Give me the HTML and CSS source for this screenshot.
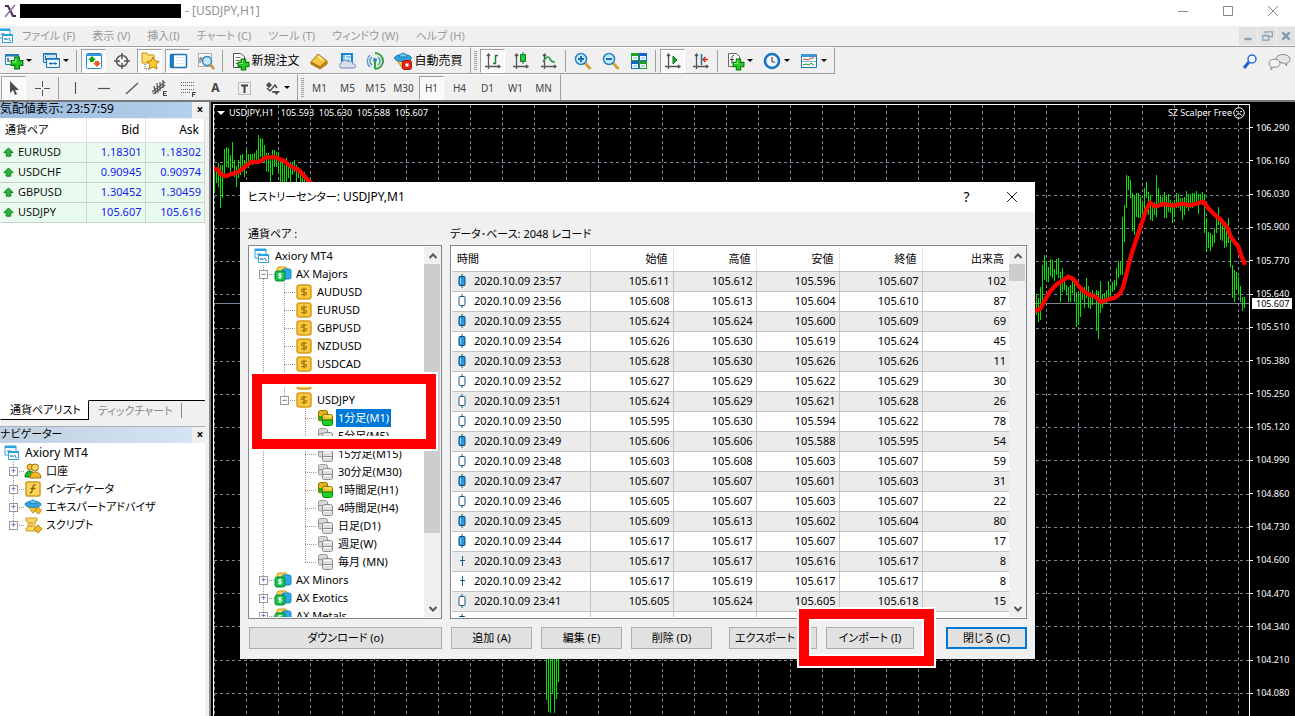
FILE: index.html
```html
<!DOCTYPE html>
<html lang="ja">
<head>
<meta charset="utf-8">
<title>[USDJPY,H1]</title>
<link rel="stylesheet" href="styles.css">
</head>
<body>
<svg class="defs" aria-hidden="true">
  <symbol id="mt" viewBox="0 0 16 16"><path d="M1 1h11v9H1z" fill="#fff" stroke="#2ba3e0"/><path d="M1 2h11" stroke="#2ba3e0" stroke-width="2"/><path d="M3 7l1-2 1 2 1-2 1 2" fill="none" stroke="#7aa8dc"/><path d="M4.500 6.500h10v8h-10z" fill="#fff" stroke="#2ba3e0"/><path d="M4 7h11" stroke="#2ba3e0" stroke-width="2"/><path d="M6 10l1 2 1-2 1 2 2-2 1 3 1-1" fill="none" stroke="#5b8ed0"/></symbol>
  <symbol id="plus" viewBox="0 0 12 12"><path d="M4 1h4v3h3v4H8v3H4V8H1V4h3z" fill="#22c922" stroke="#087a08"/><path d="M5 2v3H2" fill="none" stroke="#7cf07c"/></symbol>
  <symbol id="newchart" viewBox="0 0 20 20"><path d="M1.500 3.500h13v10h-13z" fill="#e9f5ff" stroke="#2a7cb5"/><path d="M1 4.500h14" stroke="#2a7cb5" stroke-width="2"/><path d="M4 7v4M3 8h2M4 10h2" stroke="#456"/><use href="#plus" x="6" y="5" width="14" height="14"/></symbol>
  <symbol id="wins" viewBox="0 0 20 20"><path d="M2.500 2.500h13v9h-13z" fill="#cfe6f7" stroke="#1c71b0"/><path d="M5.500 7.500h13v9h-13z" fill="#e9f5ff" stroke="#1c71b0"/><path d="M3 3.500h12M6 8.500h12" stroke="#3f95cf"/><path d="M8 12.500h8M10 11v3M14 11v3M4.500 5v4" stroke="#1c71b0"/></symbol>
  <symbol id="mw" viewBox="0 0 20 20"><rect x="2.500" y="2.500" width="15" height="15" rx="1" fill="#fff" stroke="#2387cb"/><path d="M3 4h14" stroke="#3b9add" stroke-width="2"/><path d="M8 5l4 4h-2v2H6V9H4z" fill="#14a314"/><path d="M13 16l-4-4h2v-2h4v2h2z" fill="#f0561d"/></symbol>
  <symbol id="target" viewBox="0 0 20 20"><circle cx="10" cy="10" r="5.500" fill="none" stroke="#555" stroke-width="1.500"/><path d="M10 2v6M10 12v6M2 10h6M12 10h6" stroke="#555" stroke-width="1.500"/></symbol>
  <symbol id="folderstar" viewBox="0 0 20 20"><path d="M2 2h5l1 2h6v8H2z" fill="#ffdc6b" stroke="#c99412"/><path d="M5 13v5h5" fill="none" stroke="#555" stroke-dasharray="1 1"/><path d="M13 6l2 4 4 .5-3 3 1 4.500-4-2-4 2 1-4.500-3-3 4-.5z" fill="#ffcb2e" stroke="#b87f09"/></symbol>
  <symbol id="nav" viewBox="0 0 20 20"><rect x="2.500" y="3.500" width="16" height="13" rx="1" fill="#fff" stroke="#1374bb" stroke-width="1.500"/><path d="M4.500 4v12" stroke="#1d7fc5" stroke-width="3"/><path d="M8 6.500h9M8 9.500h9M8 12.500h9" stroke="#dce9f5"/></symbol>
  <symbol id="tester" viewBox="0 0 20 20"><path d="M2.500 2.500h13v13h-13z" fill="#f5f5f5" stroke="#aaa"/><path d="M4 12V7h2v3h2V6M13 5v3" fill="none" stroke="#555"/><circle cx="11" cy="10" r="4.500" fill="#c5e5fa" fill-opacity=".9" stroke="#2e8ccc" stroke-width="1.500"/><path d="M14 13l4 5" stroke="#c89030" stroke-width="2.500"/></symbol>
  <symbol id="order" viewBox="0 0 20 20"><path d="M3.500 2.500h7l4 3v11h-11z" fill="#fafafa" stroke="#555"/><path d="M5.500 6.500h5M5.500 9.500h6M5.500 12.500h4" stroke="#777"/><use href="#plus" x="7" y="7" width="13" height="13"/></symbol>
  <symbol id="gold" viewBox="0 0 20 20"><path d="M9 3l9 7-7 6-9-5z" fill="#f6c445" stroke="#a86e0b"/><path d="M2 11l9 5 7-6v3l-7 5-9-5z" fill="#c98a12" stroke="#a86e0b"/><path d="M9 5l5 4" stroke="#ffe9a5" stroke-width="2"/></symbol>
  <symbol id="cloud" viewBox="0 0 20 20"><path d="M5 3h10v9H5z" fill="#eaf6ff" stroke="#1c84cf" stroke-width="2"/><path d="M7 3v7M9 6h5M9 9h4" stroke="#2497e0"/><path d="M4 17a3 3 0 0 1 0-5 4 4 0 0 1 7-1 3 3 0 0 1 5 2 2 2 0 0 1 1 4z" fill="#d5dff0" stroke="#7289b5"/></symbol>
  <symbol id="signal" viewBox="0 0 20 20"><circle cx="10" cy="10" r="8" fill="#e4f0e8"/><path d="M10 18a8 8 0 0 0 0-16" fill="none" stroke="#39a045" stroke-width="2"/><path d="M5 4a8 8 0 0 0 0 12M7 6a5 5 0 0 0 0 8M13 6a5 5 0 0 1 0 8" fill="none" stroke="#5b9bd0" stroke-width="1.500"/><circle cx="10" cy="9" r="2" fill="#1d8ac9"/><path d="M10 10v8" stroke="#30a53b" stroke-width="2"/></symbol>
  <symbol id="hat" viewBox="0 0 20 20"><path d="M3 8l7 10 7-9z" fill="#f4c33b" stroke="#c28c16"/><ellipse cx="10" cy="7" rx="8.500" ry="3.500" fill="#35a4e0" stroke="#1b7db8"/><path d="M6 6c0-5 8-5 8 0z" fill="#6fc7f2" stroke="#1b7db8"/></symbol>
  <symbol id="auto" viewBox="0 0 20 20"><use href="#hat"/><rect x="9.500" y="9.500" width="9" height="9" rx="2" fill="#e22718" stroke="#a91208"/><path d="M12.500 12.500h3v3h-3z" fill="#fff"/></symbol>
  <symbol id="axes" viewBox="0 0 20 20"><path d="M5.500 3v15M2 15.500h15M4 5l1.500-2L7 5M15 14l2 1.500-2 1.500" fill="none" stroke="#555" stroke-width="1.300"/></symbol>
  <symbol id="bars" viewBox="0 0 20 20"><use href="#axes"/><path d="M12.500 4v9M10 12.500h3M12 4.500h3" stroke="#17852a" stroke-width="1.500"/></symbol>
  <symbol id="candles" viewBox="0 0 20 20"><use href="#axes"/><path d="M12 1v12" stroke="#17852a"/><path d="M9.500 3.500h5v7h-5z" fill="#22c93d" stroke="#0f7a20"/></symbol>
  <symbol id="line" viewBox="0 0 20 20"><use href="#axes"/><path d="M4 11c3-6 6-6 7-3s3 3 5 3" fill="none" stroke="#1c9433" stroke-width="1.500"/></symbol>
  <symbol id="lens" viewBox="0 0 20 20"><path d="M12 12l5.500 6" stroke="#d2a032" stroke-width="3"/><circle cx="8" cy="8" r="5.500" fill="#c7e9fb" stroke="#2383c8" stroke-width="1.500"/></symbol>
  <symbol id="zin" viewBox="0 0 20 20"><use href="#lens"/><path d="M5 8h6M8 5v6" stroke="#1470b4" stroke-width="2"/></symbol>
  <symbol id="zout" viewBox="0 0 20 20"><use href="#lens"/><path d="M5 8h6" stroke="#1470b4" stroke-width="2"/></symbol>
  <symbol id="tiles" viewBox="0 0 20 20"><path d="M2 2h8v8H2zM10 10h8v8h-8z" fill="#1ba51b"/><path d="M10 2h8v8h-8zM2 10h8v8H2z" fill="#1761d2"/><path d="M3 5h6v4H3zM11 5h6v4h-6zM3 13h6v4H3zM11 13h6v4h-6z" fill="#eef5ff"/><path d="M4 7h4M12 7h4M4 15h4M12 15h4" stroke="#8cb3df"/></symbol>
  <symbol id="scroll" viewBox="0 0 20 20"><use href="#axes"/><path d="M10 5l4 4-4 4z" fill="#20a437" stroke="#0f7a20"/></symbol>
  <symbol id="shift" viewBox="0 0 20 20"><use href="#axes"/><path d="M10.500 3v11" stroke="#1b6da8" stroke-width="1.500"/><path d="M17 8.500h-5M14.500 6L12 8.500l2.500 2.500" fill="none" stroke="#c93415" stroke-width="1.500"/></symbol>
  <symbol id="indi" viewBox="0 0 20 20"><path d="M3.500 2.500h8l3 3v10h-11z" fill="#fafafa" stroke="#666"/><path d="M9 4.500c-2 0-2 1-2 3v5M5 8.500h4" fill="none" stroke="#444"/><use href="#plus" x="7" y="7" width="13" height="13"/></symbol>
  <symbol id="clock" viewBox="0 0 20 20"><circle cx="10" cy="10" r="7" fill="#f2f7fb" stroke="#1673c4" stroke-width="2.600"/><path d="M10 6v4.500l3 1" fill="none" stroke="#555" stroke-width="1.300"/></symbol>
  <symbol id="tmpl" viewBox="0 0 20 20"><path d="M2.500 3.500h15v13h-15z" fill="#fff" stroke="#1c71b0"/><path d="M2 4.500h16" stroke="#3b98d8" stroke-width="3"/><path d="M4 9l2-1 3 1 3-2 3 0" fill="none" stroke="#c0391c"/><path d="M3 10.500h14" stroke="#8bb9dc"/><path d="M4 14l3-1 3 1 2-2 3 2" fill="none" stroke="#249538"/></symbol>
  <symbol id="arrow" viewBox="0 0 20 20"><path d="M6 3v12l3-3 2 5 2-1-2-4h4z" fill="#4d4d4d"/></symbol>
  <symbol id="cross" viewBox="0 0 20 20"><path d="M10.500 3v6M10.500 12v6M3 10.500h6M12 10.500h6" stroke="#555"/></symbol>
  <symbol id="vl" viewBox="0 0 20 20"><path d="M9.500 4v12" stroke="#555" stroke-width="1.200"/></symbol>
  <symbol id="hl" viewBox="0 0 20 20"><path d="M4 10.500h12" stroke="#555" stroke-width="1.200"/></symbol>
  <symbol id="dl" viewBox="0 0 20 20"><path d="M4 16L16 5" stroke="#555" stroke-width="1.300"/></symbol>
  <symbol id="chan" viewBox="0 0 20 20"><path d="M2 14L15 4M3 16l12-9M4 8l2 8M7 5l1 10M10 4v9M13 2v8" stroke="#555" stroke-width="1.300"/><path d="M13.500 13v5M13 13.500h4M13 15.500h3M13 17.500h4" stroke="#444"/></symbol>
  <symbol id="fib" viewBox="0 0 20 20"><path d="M3 4.500h14M3 7.500h14M3 11.500h14M3 14.500h9" stroke="#666" stroke-dasharray="1 1"/><path d="M14.500 14v5M14 14.500h4M14 16.500h3" stroke="#444"/></symbol>
  <symbol id="tbox" viewBox="0 0 20 20"><path d="M4.500 4.500h12v12h-12z" fill="none" stroke="#888" stroke-dasharray="1 1"/><path d="M7 7.500h7M10.500 7v8" stroke="#444" stroke-width="2"/></symbol>
  <symbol id="shapes" viewBox="0 0 20 20"><path d="M4 7l3-3 3 3-3 3zM11 13h7l-3.500 4z" fill="#4d4d4d"/><path d="M5 10l3 3 5-6 2 3M10 14h3" fill="none" stroke="#4d4d4d" stroke-width="1.500"/></symbol>
  <symbol id="up" viewBox="0 0 12 12"><path d="M6 1l5 5H8.500v4h-5V6H1z" fill="#27b53a" stroke="#0c7a1f"/></symbol>
  <symbol id="coin" viewBox="0 0 16 16"><rect x="1" y="1" width="14" height="14" rx="2.500" fill="#fbc93f" stroke="#d69a1c" stroke-width="1.500"/><path d="M10.500 5.500c-1-1-5-1-5 1s5 1 5 3-4 2-5 .500M8 3.500v9" fill="none" stroke="#a66f08" stroke-width="1.200"/></symbol>
  <symbol id="group" viewBox="0 0 18 16"><rect x="3" y="1" width="10" height="8" rx="2" fill="#fbd557" stroke="#c9971b"/><rect x="8" y="3" width="9" height="10" rx="2" fill="#2aa9ea" stroke="#1382c0"/><rect x="1" y="5" width="10" height="10" rx="2" fill="#18c14e" stroke="#078531"/><path d="M8 8c-1-1-4-.5-4 .500s4 1 4 2-3 1.500-4 .500M6 7v6" fill="none" stroke="#fff"/></symbol>
  <symbol id="dby" viewBox="0 0 18 16"><path d="M2.500 2c0-1 1-1.500 2-1.500h5c1 0 2 .5 2 1.500v9h-7c-1 0-2-.5-2-1z" fill="#e0b516" stroke="#8d7009"/><path d="M3 6h4v4.500H4L3 10z" fill="#1bb51b"/><path d="M6.500 6c0-1 1-1.500 2-1.500h6c1 0 2 .5 2 1.500v4h-10z" fill="#f2cb22" stroke="#8d7009"/><path d="M6.500 10h10v4c0 1-1 1.500-2 1.500h-6c-1 0-2-.5-2-1.500z" fill="#20d020" stroke="#0b8a0b"/><path d="M8 6h7" stroke="#fff09a"/></symbol>
  <symbol id="dbg" viewBox="0 0 18 16"><path d="M2.500 2c0-1 1-1.500 2-1.500h5c1 0 2 .5 2 1.500v9h-7c-1 0-2-.5-2-1z" fill="#d8d8d8" stroke="#999"/><path d="M3 5.500h4" stroke="#999"/><path d="M6.500 6c0-1 1-1.500 2-1.500h6c1 0 2 .5 2 1.500v8c0 1-1 1.500-2 1.500h-6c-1 0-2-.5-2-1.500z" fill="#dedede" stroke="#8d8d8d"/><path d="M7 10.500h9" stroke="#8d8d8d"/><path d="M8 6.500h7M8 11.500h7" stroke="#fff"/></symbol>
  <symbol id="people" viewBox="0 0 18 16"><circle cx="6" cy="4" r="3" fill="#f5c33a" stroke="#a37408"/><path d="M1 14c0-8 9-8 10 0z" fill="#1fb42b" stroke="#0c7a16"/><circle cx="11" cy="4.500" r="3.500" fill="#ffd35a" stroke="#a37408"/><path d="M6 15c0-8 11-8 11 0z" fill="#f3b928" stroke="#a37408"/></symbol>
  <symbol id="func" viewBox="0 0 16 16"><rect x="1" y="1" width="14" height="14" rx="1.500" fill="#fcd65c" stroke="#d19a1a" stroke-width="1.500"/><path d="M11 4c-3-1-3 2-3.500 4S7 12 5 12M5.500 7.500h5" fill="none" stroke="#8a5a05" stroke-width="1.300"/></symbol>
  <symbol id="gem" viewBox="0 0 8 8"><path d="M4 0l4 4-4 4-4-4z" fill="#f0b92b" stroke="#b5820f"/></symbol>
  <symbol id="expert" viewBox="0 0 20 18"><path d="M3 7l7 9 6-8z" fill="#f4c33b" stroke="#c28c16"/><ellipse cx="10" cy="6" rx="9" ry="3.500" fill="#35a4e0" stroke="#1b7db8"/><path d="M6 5c0-5 8-5 8 0z" fill="#6fc7f2" stroke="#1b7db8"/><use href="#gem" x="12" y="9" width="8" height="8"/></symbol>
  <symbol id="scriptic" viewBox="0 0 18 16"><path d="M2 1h11v3h-2v7h2v3H2v-3h2V4H2z" fill="#fbd768" stroke="#cf9d24"/><path d="M5 6h4M5 9h4" stroke="#b3841b"/><use href="#gem" x="10" y="8" width="8" height="8"/></symbol>
  <symbol id="kf" viewBox="0 0 10 14"><path d="M5 0v14" stroke="#0b4a77"/><rect x="2" y="2.500" width="6" height="9" rx="1" fill="#2b9be0" stroke="#0b4a77"/><path d="M3.500 4v6" stroke="#8fd0f7"/></symbol>
  <symbol id="kh" viewBox="0 0 10 14"><path d="M5 0v14" stroke="#145b88"/><rect x="2" y="2.500" width="6" height="9" rx="1" fill="#fff" stroke="#145b88"/></symbol>
  <symbol id="kd" viewBox="0 0 10 14"><path d="M5.500 2v10M3 6.500h5" stroke="#145b88"/></symbol>
  <symbol id="cu" viewBox="0 0 10 10"><path d="M1.500 7L5 3.500 8.500 7" fill="none" stroke="#555" stroke-width="2"/></symbol>
  <symbol id="cd" viewBox="0 0 10 10"><path d="M1.500 3L5 6.500 8.500 3" fill="none" stroke="#555" stroke-width="2"/></symbol>
</svg>

<header class="titlebar">
  <svg class="logo" viewBox="0 0 12 14"><path d="M1 2h3l5 10h3" fill="none" stroke="#4b2a63" stroke-width="2"/><path d="M11 1L1 13" stroke="#8f6fa8" stroke-width="1.500"/></svg>
  <span class="redacted"></span>
  <span class="caption">- [USDJPY,H1]</span>
  <div class="winbtns">
    <button aria-label="Minimize"><svg viewBox="0 0 12 12"><path d="M1 6.500h10" stroke="#888"/></svg></button>
    <button aria-label="Maximize"><svg viewBox="0 0 12 12"><path d="M1.500 1.500h9v9h-9z" fill="none" stroke="#888"/></svg></button>
    <button aria-label="Close"><svg viewBox="0 0 12 12"><path d="M1 1l10 10M11 1L1 11" stroke="#888"/></svg></button>
  </div>
</header>
<nav class="menubar">
  <svg class="i16"><use href="#mt"/></svg>
  <button>ファイル (F)</button><button>表示 (V)</button><button>挿入(I)</button><button>チャート (C)</button><button>ツール (T)</button><button>ウィンドウ (W)</button><button>ヘルプ (H)</button>
  <div class="mdi">
    <button aria-label="最小化"><svg viewBox="0 0 10 10"><path d="M2 7.500h6" stroke="#8aa2b5" stroke-width="2"/></svg></button>
    <button aria-label="元に戻す"><svg viewBox="0 0 10 10"><path d="M3.500 3V1.500h6v4H7M1.500 4.500h5v4h-5zM1 5h6" fill="none" stroke="#8aa2b5"/></svg></button>
    <button aria-label="閉じる"><svg viewBox="0 0 10 10"><path d="M2 2l6 6M8 2L2 8" stroke="#8099ad" stroke-width="2"/></svg></button>
  </div>
</nav>
<div class="bars">
  <div class="bar">
    <div class="strip first">
      <button class="tb dd" aria-label="新規チャート"><svg><use href="#newchart"/></svg></button>
      <button class="tb dd" aria-label="ウィンドウ配置"><svg><use href="#wins"/></svg></button>
      <i class="sep"></i>
      <button class="tb on" aria-label="気配値表示"><svg><use href="#mw"/></svg></button>
      <button class="tb" aria-label="データウィンドウ"><svg><use href="#target"/></svg></button>
      <button class="tb on" aria-label="ナビゲーター"><svg><use href="#folderstar"/></svg></button>
      <button class="tb on" aria-label="ターミナル"><svg><use href="#nav"/></svg></button>
      <button class="tb" aria-label="テスター"><svg><use href="#tester"/></svg></button>
      <i class="sep"></i>
      <button class="tb txt"><svg><use href="#order"/></svg>新規注文</button>
      <button class="tb" aria-label="MetaEditor"><svg><use href="#gold"/></svg></button>
      <button class="tb" aria-label="VPS"><svg><use href="#cloud"/></svg></button>
      <button class="tb" aria-label="シグナル"><svg><use href="#signal"/></svg></button>
      <button class="tb txt"><svg><use href="#auto"/></svg>自動売買</button>
    </div>
    <div class="strip">
      <i class="grip"></i>
      <button class="tb on" aria-label="バーチャート"><svg><use href="#bars"/></svg></button>
      <button class="tb" aria-label="ローソク足"><svg><use href="#candles"/></svg></button>
      <button class="tb" aria-label="ラインチャート"><svg><use href="#line"/></svg></button>
      <i class="sep"></i>
      <button class="tb" aria-label="拡大"><svg><use href="#zin"/></svg></button>
      <button class="tb" aria-label="縮小"><svg><use href="#zout"/></svg></button>
      <button class="tb" aria-label="整列"><svg><use href="#tiles"/></svg></button>
      <i class="sep"></i>
      <button class="tb on" aria-label="自動スクロール"><svg><use href="#scroll"/></svg></button>
      <button class="tb" aria-label="チャートシフト"><svg><use href="#shift"/></svg></button>
      <i class="sep"></i>
      <button class="tb dd" aria-label="インディケータ"><svg><use href="#indi"/></svg></button>
      <button class="tb dd" aria-label="時間軸"><svg><use href="#clock"/></svg></button>
      <button class="tb dd" aria-label="定型チャート"><svg><use href="#tmpl"/></svg></button>
    </div>
    <div class="right">
      <button class="tb" aria-label="検索"><svg viewBox="0 0 20 20"><path d="M4 17l5-6" stroke="#1d5fd0" stroke-width="3"/><circle cx="12" cy="8" r="4" fill="#fff" stroke="#1d6fe0" stroke-width="1.500"/></svg></button>
      <button class="tb wide" aria-label="チャット"><svg viewBox="0 0 24 20"><path d="M9 8c0-6 14-6 14 0 0 4-3 4-4 4l1 3-3-3c-4 0-8-1-8-4z" fill="#e6e6ea" stroke="#888"/><path d="M2 12c0-5 11-5 11 0s-5 4-7 4l-2 3v-4c-1 0-2-1-2-3z" fill="#f4f4f6" stroke="#888"/></svg></button>
    </div>
  </div>
  <div class="bar">
    <div class="strip first">
      <button class="tb on" aria-label="カーソル"><svg><use href="#arrow"/></svg></button>
      <button class="tb" aria-label="十字カーソル"><svg><use href="#cross"/></svg></button>
      <i class="sep"></i>
      <button class="tb" aria-label="垂直線"><svg><use href="#vl"/></svg></button>
      <button class="tb" aria-label="水平線"><svg><use href="#hl"/></svg></button>
      <button class="tb" aria-label="トレンドライン"><svg><use href="#dl"/></svg></button>
      <button class="tb" aria-label="チャネル"><svg><use href="#chan"/></svg></button>
      <button class="tb" aria-label="フィボナッチ"><svg><use href="#fib"/></svg></button>
      <button class="tb letter">A</button>
      <button class="tb" aria-label="ラベル"><svg><use href="#tbox"/></svg></button>
      <button class="tb dd" aria-label="矢印"><svg><use href="#shapes"/></svg></button>
    </div>
    <div class="strip">
      <i class="grip"></i>
      <button class="tb tf">M1</button><button class="tb tf">M5</button><button class="tb tf">M15</button><button class="tb tf">M30</button><button class="tb tf on">H1</button><button class="tb tf">H4</button><button class="tb tf">D1</button><button class="tb tf">W1</button><button class="tb tf">MN</button>
    </div>
  </div>
</div>

<main class="work">
  <aside class="side">
    <section class="watch">
      <h2 class="dock">気配値表示: 23:57:59<button aria-label="閉じる">×</button></h2>
      <table class="quotes">
        <colgroup><col class="q1"><col class="q2"><col></colgroup>
        <thead><tr><th>通貨ペア</th><th>Bid</th><th>Ask</th></tr></thead>
        <tbody>
          <tr><td><svg><use href="#up"/></svg>EURUSD</td><td>1.18301</td><td>1.18302</td></tr>
          <tr><td><svg><use href="#up"/></svg>USDCHF</td><td>0.90945</td><td>0.90974</td></tr>
          <tr><td><svg><use href="#up"/></svg>GBPUSD</td><td>1.30452</td><td>1.30459</td></tr>
          <tr><td><svg><use href="#up"/></svg>USDJPY</td><td>105.607</td><td>105.616</td></tr>
        </tbody>
      </table>
      <div class="tabs"><button class="tab cur">通貨ペアリスト</button><button class="tab"><span>ティックチャート</span></button></div>
    </section>
    <section class="navi">
      <h2 class="dock pale">ナビゲーター<button aria-label="閉じる">×</button></h2>
      <ul class="tree">
        <li class="root"><svg><use href="#mt"/></svg>Axiory MT4</li>
        <li><span class="g h"><button class="tg" aria-label="展開">+</button></span><svg><use href="#people"/></svg>口座</li>
        <li><span class="g h"><button class="tg" aria-label="展開">+</button></span><svg><use href="#func"/></svg>インディケータ</li>
        <li><span class="g h"><button class="tg" aria-label="展開">+</button></span><svg><use href="#expert"/></svg>エキスパートアドバイザ</li>
        <li><span class="g h end"><button class="tg" aria-label="展開">+</button></span><svg><use href="#scriptic"/></svg>スクリプト</li>
      </ul>
    </section>
  </aside>
  <section class="chart">
    <div class="plot">
      <svg class="canvas">
        <defs>
          <pattern id="vgrid" patternUnits="userSpaceOnUse" x="246" y="105" width="32" height="6"><path d="M.500 0v3" stroke="#778899"/></pattern>
        </defs>
        <g transform="translate(-214 -105)">
          <rect x="214" y="105" width="3000" height="2000" fill="url(#vgrid)"/>
          <path class="hgrid" d="M214 128.500H3000M214 162.500H3000M214 195.500H3000M214 228.500H3000M214 261.500H3000M214 294.500H3000M214 328.500H3000M214 361.500H3000M214 394.500H3000M214 427.500H3000M214 460.500H3000M214 494.500H3000M214 527.500H3000M214 560.500H3000M214 593.500H3000M214 626.500H3000M214 660.500H3000M214 693.500H3000"/>
          <path d="M214 303.500H3000" stroke="#778899"/>
          <g transform="translate(210.500 100) scale(.33333)">
            <path class="px" d="M12 220V280M18 205V250M24 190V262M30 195V323M36 195V293M42 147V235M48 140V200M54 143V205M60 165V220M66 125V205M72 180V230M78 198V262M84 180V235M90 165V225M96 162V215M102 180V230M108 150V200M114 163V205M120 162V190M126 162V195M132 160V190M138 150V190M144 105V190M150 115V170M156 118V175M162 135V185M168 160V212M174 160V215M180 170V245M186 150V225M192 150V200M198 155V200M204 157V220M210 180V245M216 190V245M222 195V245M228 175V245M234 200V235M240 185V245M246 185V225M252 180V215M258 195V245M264 200V235M270 215V245M276 222V245M282 215V245"/>
            <path class="ma" d="M10 208L20 207 30 222 45 229 60 223 80 217 95 207 110 195 122 186 145 185 155 180 165 172 180 172 195 171 207 178 220 182 235 195 250 204 265 210 278 225 292 240 304 250"/>
          </g>
          <g transform="translate(1030 165) scale(.33333)">
            <path class="px" d="M19 388V450M25 400V470M31 365V465M37 300V420M43 270V345M49 288V350M55 305V350M61 282V332M67 285V340M73 312V348M79 283V330M85 278V340M91 320V410M97 310V380M103 335V375M109 360V390M115 365V410M121 360V410M127 345V385M133 345V410M139 380V486M145 390V480M151 370V455M157 365V405M163 365V430M169 340V400M175 362V430M181 380V433M187 375V420M193 385V400M199 375V497M205 378V522M211 347V445M217 390V430M223 385V415M229 375V418M235 347V400M241 360V400M247 350V380M253 345V375M259 310V362M265 287V340M271 290V330M277 155V330M283 120V232M289 30V130M295 33V75M301 45V100M307 85V197M313 90V210M319 83V155M325 83V160M331 95V160M337 110V155M343 70V140M349 50V100M355 80V150M361 90V165M367 110V167M373 110V150M379 30V155M385 70V130M391 90V125M397 95V120M403 80V160M409 90V160M415 88V140M421 105V145M427 110V173M433 105V155M439 85V130M445 88V130M451 100V137M457 100V165M463 97V150M469 78V130M475 88V138M481 88V128M487 85V130M493 85V120M499 78V118M505 88V147M511 88V115M517 80V120M523 88V205M529 158V260M535 200V250M541 205V258M547 210V245M553 190V235M559 150V205M565 125V180M571 165V225M577 180V228M583 185V248M589 175V245M595 158V235M601 200V305M607 300V398M613 315V412M619 320V375M625 335V390M631 362V412M637 395V438M643 397V430"/>
            <path class="ma" d="M10 440L30 432 45 405 60 380 80 358 100 345 115 335 130 342 145 362 160 378 175 388 195 395 213 411 235 403 255 398 270 385 278 370 285 345 298 290 310 250 325 205 340 160 350 130 360 113 375 125 400 117 430 122 455 116 480 121 500 116 520 110 535 130 555 150 570 162 590 185 605 220 625 245 635 275 645 300"/>
          </g>
          <path class="px1" d="M546.500 650V700M548.500 650V712M550.500 650V713M552.500 650V694M554.500 650V713M556.500 650V699M558.500 650V682"/>
        </g>
      </svg>
      <div class="legend"><svg viewBox="0 0 8 6"><path d="M0 1h8L4 5z" fill="#fff"/></svg><span>USDJPY,H1&nbsp;&nbsp; 105.593&nbsp; 105.630&nbsp; 105.588&nbsp; 105.607</span>
        <span class="ea">SZ Scalper Free</span><svg class="face" viewBox="0 0 12 12"><circle cx="6" cy="6" r="5.300" fill="none" stroke="#fff"/><path d="M3 4l2 1M9 4L7 5M3 9c1-3 5-3 6 0" fill="none" stroke="#fff"/></svg></div>
    </div>
    <div class="axis">
      <span>106.290</span><span>106.160</span><span>106.030</span><span>105.900</span><span>105.770</span><span>105.640</span><span>105.510</span><span>105.380</span><span>105.250</span><span>105.120</span><span>104.990</span><span>104.860</span><span>104.730</span><span>104.600</span><span>104.470</span><span>104.340</span><span>104.210</span><span>104.080</span>
      <b class="last">105.607</b>
    </div>
  </section>
</main>

<section class="dialog" role="dialog" aria-label="ヒストリーセンター">
  <div class="dtitle"><h1><span class="kana">ヒストリーセンター</span>: USDJPY,M1</h1><button class="q">?</button><button aria-label="閉じる"><svg viewBox="0 0 12 12"><path d="M1 1l10 10M11 1L1 11" stroke="#222"/></svg></button></div>
  <div class="dbody">
    <div class="panel">
      <div class="lab">通貨ペア :</div>
      <div class="box">
        <ul class="tree">
          <li><svg><use href="#mt"/></svg>Axiory MT4</li>
          <li><span class="g h"><button class="tg" aria-label="折畳">−</button></span><svg><use href="#group"/></svg>AX Majors</li>
          <li><span class="g"></span><span class="g h"></span><svg><use href="#coin"/></svg>AUDUSD</li>
          <li><span class="g"></span><span class="g h"></span><svg><use href="#coin"/></svg>EURUSD</li>
          <li><span class="g"></span><span class="g h"></span><svg><use href="#coin"/></svg>GBPUSD</li>
          <li><span class="g"></span><span class="g h"></span><svg><use href="#coin"/></svg>NZDUSD</li>
          <li><span class="g"></span><span class="g h"></span><svg><use href="#coin"/></svg>USDCAD</li>
          <li><span class="g"></span><span class="g h"></span><svg><use href="#coin"/></svg></li>
          <li><span class="g"></span><span class="g h end"><button class="tg" aria-label="折畳">−</button></span><svg><use href="#coin"/></svg>USDJPY</li>
          <li><span class="g"></span><span class="g none"></span><span class="g h"></span><svg><use href="#dby"/></svg><span class="sel">1分足(M1)</span></li>
          <li><span class="g"></span><span class="g none"></span><span class="g h"></span><svg><use href="#dbg"/></svg>5分足(M5)</li>
          <li><span class="g"></span><span class="g none"></span><span class="g h"></span><svg><use href="#dbg"/></svg>15分足(M15)</li>
          <li><span class="g"></span><span class="g none"></span><span class="g h"></span><svg><use href="#dbg"/></svg>30分足(M30)</li>
          <li><span class="g"></span><span class="g none"></span><span class="g h"></span><svg><use href="#dby"/></svg>1時間足(H1)</li>
          <li><span class="g"></span><span class="g none"></span><span class="g h"></span><svg><use href="#dbg"/></svg>4時間足(H4)</li>
          <li><span class="g"></span><span class="g none"></span><span class="g h"></span><svg><use href="#dbg"/></svg>日足(D1)</li>
          <li><span class="g"></span><span class="g none"></span><span class="g h"></span><svg><use href="#dbg"/></svg>週足(W)</li>
          <li><span class="g"></span><span class="g none"></span><span class="g h end"></span><svg><use href="#dbg"/></svg>毎月 (MN)</li>
          <li><span class="g h"><button class="tg" aria-label="展開">+</button></span><svg><use href="#group"/></svg>AX Minors</li>
          <li><span class="g h"><button class="tg" aria-label="展開">+</button></span><svg><use href="#group"/></svg>AX Exotics</li>
          <li><span class="g h"><button class="tg" aria-label="展開">+</button></span><svg><use href="#group"/></svg>AX Metals</li>
        </ul>
        <div class="sb"><button aria-label="上へ"><svg><use href="#cu"/></svg></button><i class="thumb tall"></i><button aria-label="下へ"><svg><use href="#cd"/></svg></button></div>
      </div>
      <div class="btns"><button class="btn full">ダウンロード (o)</button></div>
    </div>
    <div class="panel">
      <div class="lab">データ･ベース: 2048 レコード</div>
      <div class="box">
        <div class="scroll">
        <table class="hist">
          <colgroup><col class="c1"><col class="c2"><col class="c2"><col class="c2"><col class="c2"><col></colgroup>
          <thead><tr><th>時間</th><th>始値</th><th>高値</th><th>安値</th><th>終値</th><th>出来高</th></tr></thead>
          <tbody>
            <tr><td><svg><use href="#kf"/></svg>2020.10.09 23:57</td><td>105.611</td><td>105.612</td><td>105.596</td><td>105.607</td><td>102</td></tr>
            <tr><td><svg><use href="#kh"/></svg>2020.10.09 23:56</td><td>105.608</td><td>105.613</td><td>105.604</td><td>105.610</td><td>87</td></tr>
            <tr><td><svg><use href="#kf"/></svg>2020.10.09 23:55</td><td>105.624</td><td>105.624</td><td>105.600</td><td>105.609</td><td>69</td></tr>
            <tr><td><svg><use href="#kf"/></svg>2020.10.09 23:54</td><td>105.626</td><td>105.630</td><td>105.619</td><td>105.624</td><td>45</td></tr>
            <tr><td><svg><use href="#kf"/></svg>2020.10.09 23:53</td><td>105.628</td><td>105.630</td><td>105.626</td><td>105.626</td><td>11</td></tr>
            <tr><td><svg><use href="#kh"/></svg>2020.10.09 23:52</td><td>105.627</td><td>105.629</td><td>105.622</td><td>105.629</td><td>30</td></tr>
            <tr><td><svg><use href="#kh"/></svg>2020.10.09 23:51</td><td>105.624</td><td>105.629</td><td>105.621</td><td>105.628</td><td>26</td></tr>
            <tr><td><svg><use href="#kh"/></svg>2020.10.09 23:50</td><td>105.595</td><td>105.630</td><td>105.594</td><td>105.622</td><td>78</td></tr>
            <tr><td><svg><use href="#kf"/></svg>2020.10.09 23:49</td><td>105.606</td><td>105.606</td><td>105.588</td><td>105.595</td><td>54</td></tr>
            <tr><td><svg><use href="#kh"/></svg>2020.10.09 23:48</td><td>105.603</td><td>105.608</td><td>105.603</td><td>105.607</td><td>59</td></tr>
            <tr><td><svg><use href="#kf"/></svg>2020.10.09 23:47</td><td>105.607</td><td>105.607</td><td>105.601</td><td>105.603</td><td>31</td></tr>
            <tr><td><svg><use href="#kh"/></svg>2020.10.09 23:46</td><td>105.605</td><td>105.607</td><td>105.603</td><td>105.607</td><td>22</td></tr>
            <tr><td><svg><use href="#kf"/></svg>2020.10.09 23:45</td><td>105.609</td><td>105.613</td><td>105.602</td><td>105.604</td><td>80</td></tr>
            <tr><td><svg><use href="#kf"/></svg>2020.10.09 23:44</td><td>105.617</td><td>105.617</td><td>105.607</td><td>105.607</td><td>17</td></tr>
            <tr><td><svg><use href="#kd"/></svg>2020.10.09 23:43</td><td>105.617</td><td>105.617</td><td>105.616</td><td>105.617</td><td>8</td></tr>
            <tr><td><svg><use href="#kd"/></svg>2020.10.09 23:42</td><td>105.617</td><td>105.619</td><td>105.617</td><td>105.617</td><td>8</td></tr>
            <tr><td><svg><use href="#kh"/></svg>2020.10.09 23:41</td><td>105.605</td><td>105.624</td><td>105.605</td><td>105.618</td><td>15</td></tr>
            <tr><td><svg><use href="#kf"/></svg></td><td></td><td></td><td></td><td></td><td></td></tr>
          </tbody>
        </table>
        </div>
        <div class="sb"><button aria-label="上へ"><svg><use href="#cu"/></svg></button><i class="thumb"></i><button aria-label="下へ"><svg><use href="#cd"/></svg></button></div>
      </div>
      <div class="btns"><button class="btn">追加 (A)</button><button class="btn">編集 (E)</button><button class="btn">削除 (D)</button><span class="exim"><button class="btn">エクスポート (X)</button><button class="btn">インポート (I)</button></span><button class="btn prime">閉じる (C)</button></div>
    </div>
  </div>
  <div class="mark one"></div>
  <div class="mark two"></div>
</section>
</body>
</html>
```
FILE: styles.css
```css
* { box-sizing: border-box; }
html, body { height: 100%; }
body {
  margin: 0;
  position: relative;
  display: flex;
  flex-direction: column;
  overflow: hidden;
  background: #f0f0f0;
  color: #000;
  font: 11px/16px "Noto Sans", "Noto Sans CJK JP", sans-serif;
  font-feature-settings: "palt";
}
button { margin: 0; padding: 0; border: 0; background: none; font: inherit; color: inherit; font-feature-settings: inherit; white-space: nowrap; }
h1, h2 { margin: 0; font-weight: normal; }
ul { margin: 0; padding: 0; list-style: none; }
svg { display: block; flex: none; }
.defs { position: absolute; width: 0; height: 0; }
.i16 { width: 16px; height: 16px; }

.titlebar { flex: none; display: flex; align-items: center; height: 26px; padding-left: 4px; padding-bottom: 4px; background: #fff; }
.logo { width: 12px; height: 14px; }
.redacted { width: 161px; height: 14px; margin: 0 4px; background: #000; }
.caption { color: #909090; font-size: 12px; }
.winbtns { display: flex; margin-left: auto; }
.winbtns button { width: 45px; height: 22px; display: grid; place-items: center; }
.winbtns svg { width: 12px; height: 12px; }

.menubar { flex: none; display: flex; align-items: center; gap: 17px; height: 21px; border-bottom: 1px solid #a0a0a0; color: #9a9a9a; }
.menubar > .i16 { margin: 0 -9px 0 -2px; }
.mdi { display: flex; gap: 1px; margin-left: auto; }
.mdi button { width: 18px; height: 18px; background: #e2e2e2; display: grid; place-items: center; }
.mdi svg { width: 12px; height: 12px; }

.bars { flex: none; border-bottom: 2px solid #777; }
.bar { display: flex; height: 27px; }
.bar + .bar { height: 26px; }
.strip { display: flex; align-items: center; gap: 3px; padding: 0 4px 0 3px; border-right: 1px solid #a0a0a0; border-bottom: 1px solid #a0a0a0; border-top: 1px solid #fff; }
.bar + .bar .strip { border-bottom: 0; }
.strip.first { padding-left: 1px; }
.tb { flex: none; width: 25px; height: 24px; display: flex; align-items: center; justify-content: center; border: 1px solid transparent; }
.tb svg { width: 20px; height: 20px; }
.tb.on { background: #f9f9f9; border-color: #a0a0a0 #fff #fff #a0a0a0; }
.tb.dd { width: 34px; gap: 2px; }
.tb.dd::after { content: ""; border: 3px solid transparent; border-top-color: #000; border-bottom: 0; }
.tb.txt { width: 76px; gap: 1px; font-size: 12px; }
.tb.letter { color: #444; font-weight: bold; font-size: 12px; }
.tb.tf { color: #444; font-size: 10px; }
.tb.wide { width: 28px; }
.tb.wide svg { width: 24px; }
.sep { flex: none; width: 1px; height: 22px; margin: 0 1px; background: #a0a0a0; }
.grip { flex: none; width: 3px; height: 20px; background: repeating-linear-gradient(#a0a0a0 0 1px, #f0f0f0 1px 2px); }
.right { display: flex; align-items: center; gap: 3px; margin-left: auto; padding-right: 2px; }

.work { flex: 1; display: flex; min-height: 0; }
.side { flex: none; width: 209px; padding-right: 4px; display: flex; flex-direction: column; }
.dock { height: 16px; margin-bottom: 1px; font-size: 12px; line-height: 14px; display: flex; justify-content: space-between; background: linear-gradient(90deg, #9abadd, #b3d1ec 192px, #f0f0f0 192px); }
.dock.pale { font-size: 11px; background: linear-gradient(90deg, #bfd0e0, #d5e4f3 192px, #f0f0f0 192px); }
.dock button { width: 10px; font-size: 12px; font-weight: bold; }
.watch { flex: none; height: 324px; display: flex; flex-direction: column; background: #fff; }
.watch .dock { flex: none; margin-bottom: 0; box-shadow: 0 1px #f0f0f0; }
.quotes { width: 100%; table-layout: fixed; border-collapse: collapse; }
.q1 { width: 86px; } .q2 { width: 59px; }
.quotes th, .quotes td { height: 20px; padding: 0 3px; text-align: right; border-right: 1px solid #d0d8d2; border-bottom: 1px solid #c8d0ca; line-height: 16px; }
.quotes th { height: 24px; font-size: 12px; font-weight: normal; border-color: #e0e0e0; padding: 0 5px; }
.quotes th:first-child, .quotes td:first-child { text-align: left; }
.quotes th:first-child { font-size: 11px; }
.quotes td { background: #e9fbef; color: #1a1af0; }
.quotes td:first-child { color: #111; }
.quotes td svg { display: inline-block; width: 11px; height: 11px; margin-right: 4px; vertical-align: -2px; }
.tabs { display: flex; margin-top: auto; background: #f0f0f0; height: 26px; align-items: flex-start; }
.tab { height: 20px; flex: 1; color: #888; border-top: 1px solid #000; text-align: left; padding-left: 9px; }
.tab span { padding-right: 8px; border-right: 1px solid #888; }
.tab.cur { flex: none; width: 89px; background: #fff; color: #000; border: 1px solid #000; border-top-color: #fff; border-left-color: #fff; }
.navi { flex: 1; background: #fff; border-top: 1px solid #b0b0b0; overflow: hidden; }
.navi .root { font-size: 12px; }

.tree { padding: 0 0 0 3px; }
.tree li { display: flex; align-items: center; height: 18px; white-space: nowrap; line-height: 18px; }
.tree li > svg { width: 18px; height: 16px; margin-right: 4px; }
.g { flex: none; align-self: stretch; width: 21px; display: grid; place-items: center; background: repeating-linear-gradient(#999 0 1px, transparent 1px 2px) 10px 0 / 1px 100% no-repeat; }
.g.h { background: repeating-linear-gradient(#999 0 1px, transparent 1px 2px) 10px 0 / 1px 100% no-repeat, repeating-linear-gradient(90deg, #999 0 1px, transparent 1px 2px) 10px 9px / 11px 1px no-repeat; }
.g.h.end { background-size: 1px 10px, 11px 1px; }
.g.none { background: none; }
.tg { width: 9px; height: 9px; border: 1px solid #999; background: #fff; color: #2b4fa0; font: 9px/7px "Liberation Sans", sans-serif; overflow: hidden; }

.chart { flex: 1; display: flex; min-width: 0; padding: 2px 0 0 2px; border-left: 2px solid #858585; background: #000; color: #fff; font-size: 9px; }
.plot { flex: 1; position: relative; min-width: 0; border: 1px solid #fff; border-bottom: 0; overflow: hidden; }
.canvas { width: 100%; height: 100%; shape-rendering: crispEdges; }
.hgrid { stroke: #778899; stroke-dasharray: 3 3; }
.px { stroke: #00e800; stroke-width: 3; fill: none; }
.px1 { stroke: #00e800; fill: none; }
.ma { stroke: #f00; stroke-width: 13; fill: none; stroke-linejoin: round; shape-rendering: auto; }
.legend { position: absolute; inset: 0 4px auto 3px; display: flex; align-items: center; gap: 4px; height: 16px; }
.legend svg { width: 8px; height: 6px; }
.legend .face { width: 12px; height: 12px; margin-left: -3px; }
.ea { margin-left: auto; }
.axis { flex: none; width: 45px; position: relative; display: grid; grid-template-rows: repeat(18, 1fr); align-items: center; padding: 7px 0 6px; }
.axis span { display: flex; align-items: center; gap: 3px; }
.axis span::before { content: ""; width: 3px; height: 1px; background: #fff; }
.last { position: absolute; top: 194px; left: 2px; right: 3px; padding-left: 4px; background: #fff; color: #000; font-weight: normal; line-height: 11px; }

.dialog { position: absolute; left: 240px; top: 182px; width: 795px; background: #f0f0f0; }
.dtitle { display: flex; align-items: center; height: 30px; padding: 0 1px 0 8px; background: #fff; }
.dtitle h1 { flex: 1; font-size: 12px; }
.kana { font-size: 11px; }
.dtitle button { width: 45px; height: 28px; display: grid; place-items: center; font-size: 14px; }
.dtitle svg { width: 12px; height: 12px; }
.dbody { display: grid; grid-template-columns: 194px 1fr; gap: 8px; padding: 14px 8px 10px; }
.panel { min-width: 0; }
.lab { height: 19px; }
.box { height: 374px; display: flex; background: #fff; border: 1px solid #828790; overflow: hidden; padding: 1px 0 1px 1px; }
.box .tree { flex: 1; min-width: 0; overflow: hidden; }
.sel { background: #0078d7; color: #fff; padding: 0 2px; margin-left: -2px; }
.scroll { flex: 1; min-width: 0; overflow: hidden; }
.sb { flex: none; width: 17px; display: flex; flex-direction: column; background: #f0f0f0; }
.sb button { height: 17px; display: grid; place-items: center; }
.sb button:last-child { margin-top: auto; }
.sb svg { width: 10px; height: 10px; }
.thumb { height: 17px; margin-right: 1px; background: #cdcdcd; }
.thumb.tall { height: 269px; }
.hist { width: 100%; table-layout: fixed; border-collapse: collapse; }
.c1 { width: 138px; } .c2 { width: 83px; }
.hist th, .hist td { height: 20px; padding: 0 3px; text-align: right; border-right: 1px solid #c4c4c4; border-bottom: 1px solid #c4c4c4; line-height: 16px; }
.hist th { height: 24px; padding: 0 5px; border-right-color: #e3e3e3; font-weight: normal; }
.hist th:first-child, .hist td:first-child { text-align: left; padding-left: 5px; }
.hist th:last-child, .hist td:last-child { border-right: 0; }
.hist tbody tr:nth-child(odd) { background: #ebebeb; }
.hist td svg { display: inline-block; width: 10px; height: 14px; margin-right: 7px; vertical-align: -3px; }
.btns { display: flex; gap: 9px; padding: 8px 0 0 1px; }
.btn { width: 81px; height: 22px; background: #e1e1e1; border: 1px solid #adadad; }
.btn.full { width: 100%; }
.exim { display: flex; gap: 9px; margin: 0 auto 0 8px; }
.exim .btn { width: 88px; overflow: hidden; }
.btn.prime { border: 2px solid #0078d7; }
.mark { position: absolute; border: 10px solid #f00; outline: 2px solid #fff; pointer-events: none; }
.mark.one { left: 12px; top: 192px; width: 184px; height: 75px; box-shadow: inset 0 0 0 3px #fff; }
.mark.two { left: 559px; top: 427px; width: 135px; height: 57px; box-shadow: inset 0 0 0 2px #fff; }
```
